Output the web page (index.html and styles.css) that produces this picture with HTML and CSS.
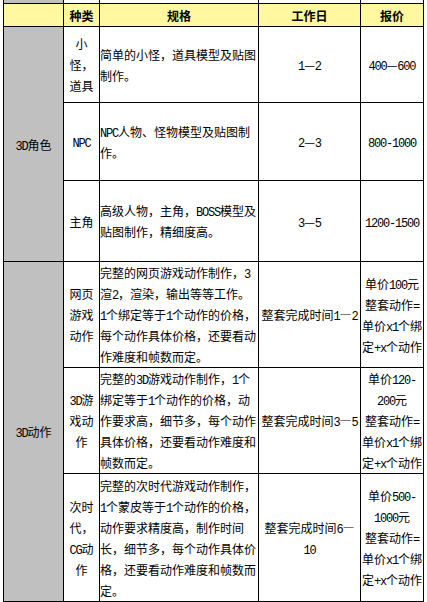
FILE: index.html
```html
<!DOCTYPE html>
<html lang="zh-CN">
<head>
<meta charset="utf-8">
<title>报价</title>
<link rel="stylesheet" href="styles.css">
</head>
<body>
<table class="price">
  <colgroup>
    <col class="c1"><col class="c2"><col class="c3"><col class="c4"><col class="c5">
  </colgroup>
  <tbody>
    <tr class="cut"><td class="gray"></td><td></td><td></td><td></td><td></td></tr>
    <tr class="head"><th></th><th>种类</th><th>规格</th><th>工作日</th><th>报价</th></tr>
    <tr class="r1">
      <td class="cat" rowspan="3"><span class="a">3D</span>角色</td>
      <td class="kind">小怪，道具</td>
      <td class="spec">简单的小怪，道具模型及贴图制作。</td>
      <td><span class="a">1</span>—<span class="a">2</span></td>
      <td><span class="a">400</span>—<span class="a">600</span></td>
    </tr>
    <tr class="r2">
      <td class="kind"><span class="a">NPC</span></td>
      <td class="spec"><span class="a">NPC</span>人物、怪物模型及贴图制作。</td>
      <td><span class="a">2</span>—<span class="a">3</span></td>
      <td><span class="a">800-1000</span></td>
    </tr>
    <tr class="r3">
      <td class="kind">主角</td>
      <td class="spec">高级人物，主角，<span class="a">BOSS</span>模型及贴图制作，精细度高。</td>
      <td><span class="a">3</span>—<span class="a">5</span></td>
      <td><span class="a">1200-1500</span></td>
    </tr>
    <tr class="r4">
      <td class="cat" rowspan="3"><span class="a">3D</span>动作</td>
      <td class="kind">网页游戏动作</td>
      <td class="spec">完整的网页游戏动作制作，<span class="a">3</span>渲<span class="a">2</span>，渲染，输出等等工作。<br><span class="a">1</span>个绑定等于<span class="a">1</span>个动作的价格，每个动作具体价格，还要看动作难度和帧数而定。</td>
      <td>整套完成时间<span class="a">1</span>—<span class="a">2</span></td>
      <td>单价<span class="a">100</span>元<br>整套动作<span class="a">=</span><br>单价<span class="a">x1</span>个绑<br>定<span class="a">+x</span>个动作</td>
    </tr>
    <tr class="r5">
      <td class="kind"><span class="a">3D</span>游戏动作</td>
      <td class="spec">完整的<span class="a">3D</span>游戏动作制作，<span class="a">1</span>个绑定等于<span class="a">1</span>个动作的价格，动作要求高，细节多，每个动作具体价格，还要看动作难度和帧数而定。</td>
      <td>整套完成时间<span class="a">3</span>—<span class="a">5</span></td>
      <td>单价<span class="a">120-</span><br><span class="a">200</span>元<br>整套动作<span class="a">=</span><br>单价<span class="a">x1</span>个绑<br>定<span class="a">+x</span>个动作</td>
    </tr>
    <tr class="r6">
      <td class="kind">次时代，<span class="a">CG</span>动作</td>
      <td class="spec">完整的次时代游戏动作制作，<span class="a">1</span>个蒙皮等于<span class="a">1</span>个动作的价格，动作要求精度高，制作时间长，细节多，每个动作具体价格，还要看动作难度和帧数而定。</td>
      <td>整套完成时间<span class="a">6</span>—<span class="a">10</span></td>
      <td>单价<span class="a">500-</span><br><span class="a">1000</span>元<br>整套动作<span class="a">=</span><br>单价<span class="a">x1</span>个绑<br>定<span class="a">+x</span>个动作</td>
    </tr>
    <tr class="tail"><td></td><td></td><td></td><td></td><td></td></tr>
  </tbody>
</table>
</body>
</html>
```
FILE: styles.css
```css
html, body {
  margin: 0;
  padding: 0;
  background: #ffffff;
}

.price {
  border-collapse: separate;
  border-spacing: 0;
  table-layout: fixed;
  width: 421px;
  margin-left: 3px;
  border-left: 1px solid #000000;
  font-family: "Noto Sans CJK SC", sans-serif;
  font-size: 12px;
  line-height: 21px;
  color: #000000;
  text-autospace: no-autospace;
  text-spacing-trim: space-all;
}

.c1 { width: 60px; }
.c2 { width: 36px; }
.c3 { width: 159px; }
.c4 { width: 102px; }
.c5 { width: 63px; }

.price td,
.price th {
  box-sizing: border-box;
  padding: 0;
  border-right: 1px solid #000000;
  border-bottom: 1px solid #000000;
  text-align: center;
  vertical-align: middle;
  font-weight: 400;
}

.price .spec {
  text-align: left;
}

.head th {
  background: #fff8a0;
  font-weight: 700;
}

.gray,
.cat {
  background: #c0c0c0;
}

.a {
  font-family: "Liberation Mono", monospace;
  font-size: 12px;
  letter-spacing: -1.2px;
  line-height: 1;
}

.cut { height: 4px; }
.head { height: 23px; }
.r1 { height: 76px; }
.r2 { height: 78px; }
.r3 { height: 81px; }
.r4 { height: 106px; }
.r5 { height: 105px; }
.r6 { height: 128px; }
.tail { height: 6px; }
```
